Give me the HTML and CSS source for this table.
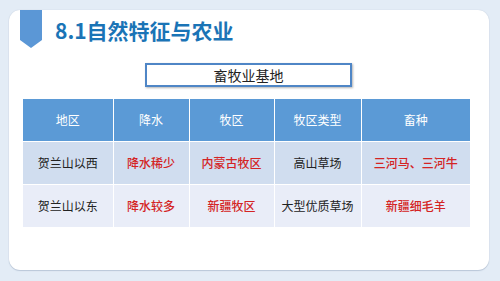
FILE: index.html
```html
<!DOCTYPE html>
<html lang="zh">
<head>
<meta charset="utf-8">
<link rel="stylesheet" href="styles.css">
</head>
<body>
<div class="card">
  <div class="head">
    <svg class="flag" width="22" height="38" viewBox="0 0 22 38"><polygon points="0,0 22,0 22,30 11,38 0,30" fill="#5b97d6"/></svg>
    <h1 class="title">8.1自然特征与农业</h1>
  </div>
  <div class="labelrow"><div class="label">畜牧业基地</div></div>
  <table class="tbl">
    <colgroup><col class="c1"><col class="c2"><col class="c3"><col class="c4"><col class="c5"></colgroup>
    <thead><tr><th>地区</th><th>降水</th><th>牧区</th><th>牧区类型</th><th>畜种</th></tr></thead>
    <tbody>
      <tr class="r1"><td>贺兰山以西</td><td class="red">降水稀少</td><td class="red">内蒙古牧区</td><td>高山草场</td><td class="red">三河马、三河牛</td></tr>
      <tr class="r2"><td>贺兰山以东</td><td class="red">降水较多</td><td class="red">新疆牧区</td><td>大型优质草场</td><td class="red">新疆细毛羊</td></tr>
    </tbody>
  </table>
</div>
</body>
</html>
```
FILE: styles.css
```css
html, body { margin: 0; padding: 0; }
body {
  width: 500px; height: 281px; overflow: hidden;
  background: #e3ecf6;
  font-family: "Noto Sans CJK SC", "Noto Sans", sans-serif;
  padding: 10px 0 0 9px;
  box-sizing: border-box;
}
.card {
  width: 480px; height: 260px;
  background: #fff;
  border-radius: 11px;
  box-shadow: 0 1px 1px rgba(120,140,170,0.35), 0 0 1px rgba(120,140,170,0.4);
  box-sizing: border-box;
  padding: 0 0 0 14px;
}
.head { display: flex; align-items: flex-start; height: 48px; }
.flag { display: block; margin-left: -3px; }
.title {
  margin: 5px 0 0 13px;
  font-size: 21px; font-weight: 700; color: #1a74b6;
  line-height: 30px;
}
.labelrow { display: flex; padding-left: 122px; margin-top: 5px; }
.label {
  width: 207px; height: 24px; box-sizing: border-box;
  border: 2px solid #4f86c6;
  box-shadow: 1px 1px 2px rgba(0,0,0,0.3);
  display: flex; align-items: center; justify-content: center;
  font-size: 14px; color: #222; line-height: 1;
}
.tbl {
  margin-top: 12px;
  border-collapse: collapse;
  width: 447px;
  table-layout: fixed;
  font-size: 12px;
}
.c1 { width: 90px; } .c2 { width: 76px; } .c3 { width: 85px; } .c4 { width: 87px; } .c5 { width: 109px; }
.tbl th, .tbl td {
  border: 1px solid #fff;
  text-align: center;
  padding: 0;
  height: 42px;
  line-height: 1;
}
.tbl th { background: #5b9ad6; color: #fff; font-weight: 400; font-size: 12px; }
.tbl tr.r1 td { background: #d0ddef; color: #222; }
.tbl tr.r2 td { background: #e9edf8; color: #222; }
.tbl tr td.red { color: #d42424; font-weight: 500; }
.tbl thead tr th { border-top: none; }
.tbl tr th:first-child, .tbl tr td:first-child { border-left: none; }
.tbl tr th:last-child, .tbl tr td:last-child { border-right: none; }
```
